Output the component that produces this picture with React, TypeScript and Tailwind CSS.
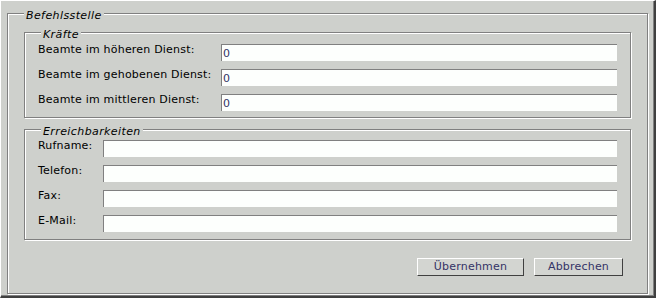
import React from 'react'

const bg = 'bg-[#ced0cc]'

function Group({ title, legendClass, className, children }: { title: string; legendClass: string; className: string; children: React.ReactNode }) {
  return (
    <fieldset className={`border border-[#808080] shadow-[inset_1px_1px_0_#fff,1px_1px_0_#fff] ${className}`}>
      <legend className={`${legendClass} bg-[#ced0cc] px-[2px] pt-[4px] text-[11px] leading-[13px] italic tracking-[0.4px] text-black`}>
        {title}
      </legend>
      {children}
    </fieldset>
  )
}

function Field({ label, labelWidth, value }: { label: string; labelWidth: string; value?: string }) {
  return (
    <div className="flex items-start">
      <label className={`${labelWidth} shrink-0 text-[11px] leading-[11px] tracking-[0.2px] text-black whitespace-nowrap`}>{label}</label>
      <input
        type="text"
        defaultValue={value}
        className="h-[17px] flex-1 min-w-0 border-t border-l border-[#808080] bg-[#fdfffd] pl-[1px] text-[11px] text-[#333366] outline-none font-['DejaVu_Sans',sans-serif]"
      />
    </div>
  )
}

function Button({ label, width }: { label: string; width: string }) {
  return (
    <button className={`${width} h-[18px] border border-t-white border-l-white border-b-[#404040] border-r-[#404040] bg-[#d3d5d1] text-[11px] leading-[16px] tracking-[0.2px] text-[#333366]`}>
      {label}
    </button>
  )
}

export default function App() {
  return (
    <div className={`w-[656px] h-[298px] ${bg} border-t border-l border-b-2 border-r-2 border-t-white border-l-white border-b-[#404040] border-r-[#404040] shadow-[inset_-1px_-1px_0_#808080] font-['DejaVu_Sans',sans-serif] flex flex-col`}>
      <Group title="Befehlsstelle" legendClass="ml-0" className="mt-[4px] mb-[2px] mx-[6px] px-[16px] pt-[2px] pb-[17px] flex-1">
        <Group title="Kräfte" legendClass="ml-[3px]" className="pl-[13px] pr-[13px] pt-[3px] pb-[6px]">
          <div className="flex flex-col gap-[8px]">
            <Field label="Beamte im höheren Dienst:" labelWidth="w-[183px]" value="0" />
            <Field label="Beamte im gehobenen Dienst:" labelWidth="w-[183px]" value="0" />
            <Field label="Beamte im mittleren Dienst:" labelWidth="w-[183px]" value="0" />
          </div>
        </Group>
        <Group title="Erreichbarkeiten" legendClass="ml-[3px]" className="mt-[3px] pl-[13px] pr-[13px] pt-[2px] pb-[7px]">
          <div className="flex flex-col gap-[8px]">
            <Field label="Rufname:" labelWidth="w-[65px]" />
            <Field label="Telefon:" labelWidth="w-[65px]" />
            <Field label="Fax:" labelWidth="w-[65px]" />
            <Field label="E-Mail:" labelWidth="w-[65px]" />
          </div>
        </Group>
        <div className="mt-[18px] flex justify-end gap-[10px] pr-[8px]">
          <Button label="Übernehmen" width="w-[107px]" />
          <Button label="Abbrechen" width="w-[89px]" />
        </div>
      </Group>
    </div>
  )
}
